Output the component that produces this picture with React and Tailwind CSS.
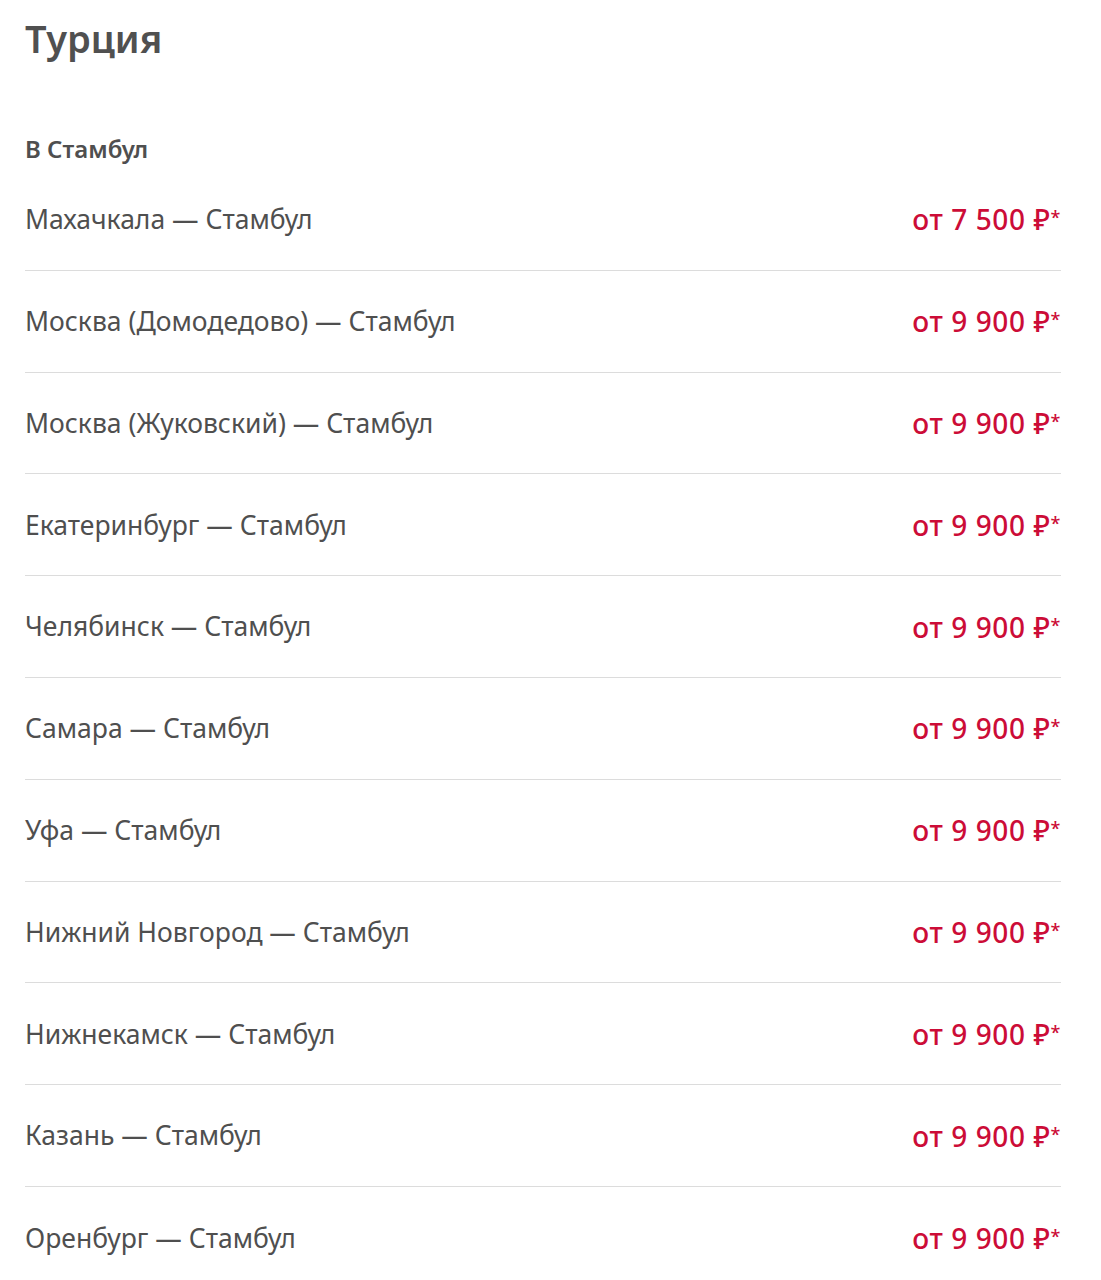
const routes = [
  { from: "Махачкала", price: "7 500" },
  { from: "Москва (Домодедово)", price: "9 900" },
  { from: "Москва (Жуковский)", price: "9 900" },
  { from: "Екатеринбург", price: "9 900" },
  { from: "Челябинск", price: "9 900" },
  { from: "Самара", price: "9 900" },
  { from: "Уфа", price: "9 900" },
  { from: "Нижний Новгород", price: "9 900" },
  { from: "Нижнекамск", price: "9 900" },
  { from: "Казань", price: "9 900" },
  { from: "Оренбург", price: "9 900" },
];

export default function App() {
  return (
    <div className="min-h-screen bg-white pl-[25px] pr-[40px] text-[#4f4f4f] font-['Noto_Sans',sans-serif]">
      {/* Country title */}
      <h1 className="pt-[12px] text-[38px] leading-[52px] font-semibold text-[#505050]">
        Турция
      </h1>

      <h2 className="mt-[70px] text-[24px] leading-[30px] font-semibold text-[#4f4f4f]">
        В Стамбул
      </h2>

      {/* Routes */}
      <ul className="mt-[5px]">
        {routes.map((r, i) => (
          <li
            key={i}
            className={
              "flex items-center justify-between h-[101.8px] " +
              (i < routes.length - 1 ? "border-b border-[#dcdcdc]" : "")
            }
          >
            <span className="text-[26.5px] leading-none">
              {r.from} — Стамбул
            </span>
            <span className="text-[28px] leading-none font-medium text-[#cc0c37] tracking-[0.6px]">
              от {r.price} ₽<span className="text-[18px] align-[6px]">*</span>
            </span>
          </li>
        ))}
      </ul>
    </div>
  );
}
